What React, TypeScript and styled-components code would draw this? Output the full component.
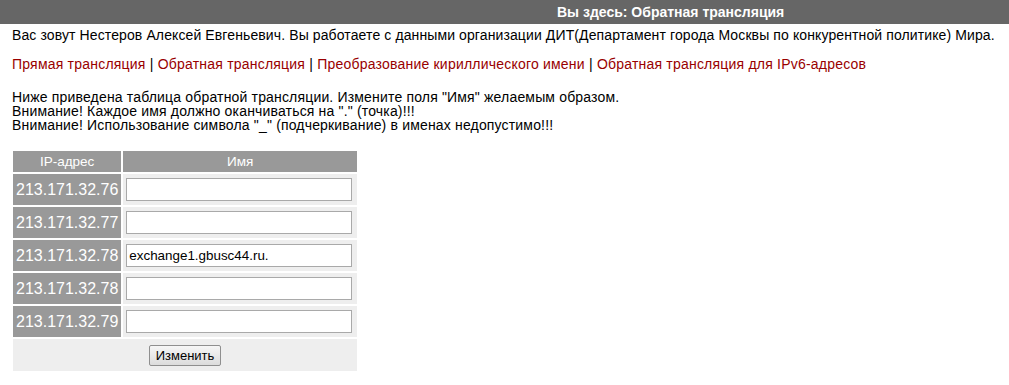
import React from "react";
import styled, { createGlobalStyle } from "styled-components";

const Global = createGlobalStyle`
  html, body { margin: 0; padding: 0; background: #fff; }
  body { font-family: Arial, "Liberation Sans", sans-serif; font-size: 14px; color: #000; }
`;

const TopBar = styled.div`
  height: 24px;
  background: #666;
  display: flex;
  align-items: center;
  padding-left: 557px;
  box-sizing: border-box;
`;

const Title = styled.span`
  color: #fff;
  font-weight: bold;
  font-size: 14px;
`;

const Content = styled.div`
  padding: 3px 0 0 12px;
`;

const Line = styled.div<{ $gap?: number; $lh?: number; $ls?: number }>`
  line-height: ${(p) => p.$lh ?? 16}px;
  margin-bottom: ${(p) => p.$gap ?? 0}px;
  letter-spacing: ${(p) => p.$ls ?? 0.12}px;
  white-space: nowrap;
`;

const Link = styled.a`
  color: #990000;
  text-decoration: none;
`;

const Sep = styled.span`
  color: #000;
`;

const Table = styled.table`
  border-collapse: separate;
  border-spacing: 2px;
  margin-left: -1px;
  width: 348px;
`;

const Th = styled.th<{ $w?: number }>`
  background: #999;
  color: #fff;
  font-weight: normal;
  font-size: 13.5px;
  height: 21px;
  padding: 0;
  text-align: center;
  ${(p) => (p.$w ? `width: ${p.$w}px;` : "")}
`;

const IpCell = styled.td`
  background: #999;
  color: #fff;
  font-size: 16px;
  height: 31px;
  padding: 0 3px;
  text-align: center;
  white-space: nowrap;
`;

const NameCell = styled.td`
  background: #eee;
  padding: 0 3px;
`;

const NameInput = styled.input`
  box-sizing: border-box;
  width: 226px;
  height: 23px;
  border: 1px solid #a9a9a9;
  background: #fff;
  font-family: Arial, "Liberation Sans", sans-serif;
  font-size: 13.4px;
  color: #000;
  padding: 0 2px;
  display: block;
  outline: none;
`;

const FooterCell = styled.td`
  background: #eee;
  height: 32px;
  text-align: center;
  padding: 0;
`;

const Button = styled.button`
  font-family: Arial, "Liberation Sans", sans-serif;
  font-size: 13px;
  color: #000;
  height: 21px;
  padding: 0 6px;
  border: 1px solid #8f8f8f;
  border-radius: 2px;
  background: linear-gradient(#f6f6f6, #dcdcdc);
  cursor: pointer;
`;

const rows = [
  { ip: "213.171.32.76", name: "" },
  { ip: "213.171.32.77", name: "" },
  { ip: "213.171.32.78", name: "exchange1.gbusc44.ru." },
  { ip: "213.171.32.78", name: "" },
  { ip: "213.171.32.79", name: "" },
];

export default function App() {
  return (
    <>
      <Global />
      <TopBar>
        <Title>Вы здесь: Обратная трансляция</Title>
      </TopBar>
      <Content>
        <Line $gap={13} $ls={0.11}>
          Вас зовут Нестеров Алексей Евгеньевич. Вы работаете с данными организации ДИТ(Департамент города Москвы по
          конкурентной политике) Мира.
        </Line>
        <Line $gap={18} $ls={0.21}>
          <Link href="#">Прямая трансляция</Link>
          <Sep> | </Sep>
          <Link href="#">Обратная трансляция</Link>
          <Sep> | </Sep>
          <Link href="#">Преобразование кириллического имени</Link>
          <Sep> | </Sep>
          <Link href="#">Обратная трансляция для IPv6-адресов</Link>
        </Line>
        <Line $lh={14} $ls={0.17}>
          Ниже приведена таблица обратной трансляции. Измените поля "Имя" желаемым образом.
        </Line>
        <Line $lh={14} $ls={0.17}>
          Внимание! Каждое имя должно оканчиваться на "." (точка)!!!
        </Line>
        <Line $lh={14} $gap={17} $ls={0.17}>
          Внимание! Использование символа "_" (подчеркивание) в именах недопустимо!!!
        </Line>
        <Table>
          <thead>
            <tr>
              <Th $w={108}>IP-адрес</Th>
              <Th>Имя</Th>
            </tr>
          </thead>
          <tbody>
            {rows.map((r, i) => (
              <tr key={i}>
                <IpCell>{r.ip}</IpCell>
                <NameCell>
                  <NameInput type="text" defaultValue={r.name} />
                </NameCell>
              </tr>
            ))}
            <tr>
              <FooterCell colSpan={2}>
                <Button type="button">Изменить</Button>
              </FooterCell>
            </tr>
          </tbody>
        </Table>
      </Content>
    </>
  );
}
